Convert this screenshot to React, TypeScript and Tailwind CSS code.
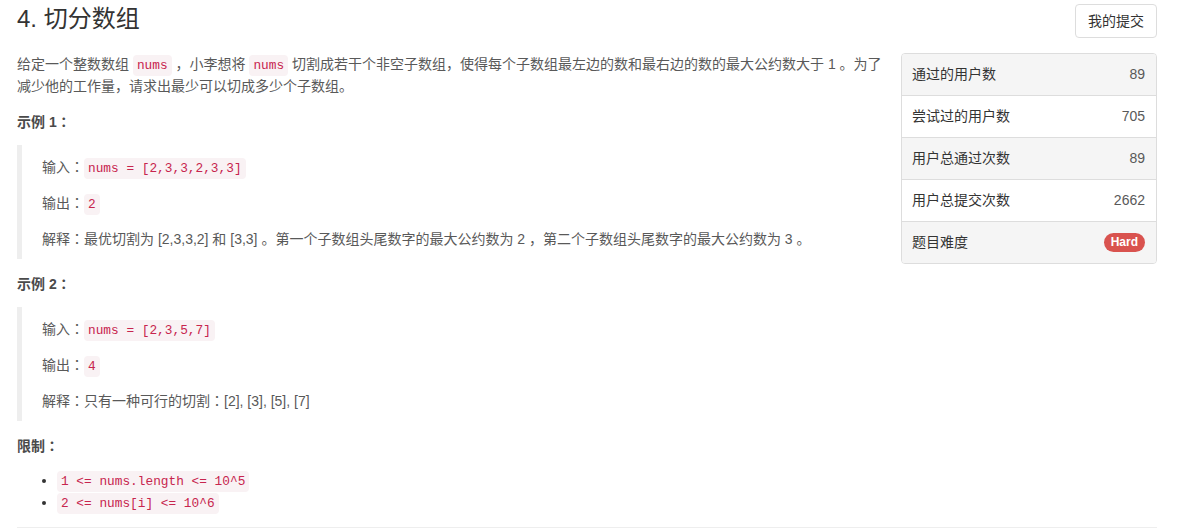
import React from "react";

const sans = "font-['Liberation_Sans','Noto_Sans_CJK_SC',sans-serif]";

// centred full-width colon, like the reference's font
function Colon() {
  return <span className="font-['Noto_Sans_CJK_TC',sans-serif]">：</span>;
}

function Code({ children }: { children: React.ReactNode }) {
  return (
    <code className="font-['Liberation_Mono','DejaVu_Sans_Mono',monospace] text-[12.8px] leading-[14px] text-[#c7254e] bg-[#f9f2f4] rounded-[4px] px-1 py-[3px]">
      {children}
    </code>
  );
}

function Example({ input, output, explain }: { input: string; output: string; explain: React.ReactNode }) {
  return (
    <div className="border-l-[5px] border-[#eeeeee] pl-[20px] py-[10px] flex flex-col gap-[14px]">
      <p className="h-[22px] leading-[22px]">
        输入<Colon />
        <Code>{input}</Code>
      </p>
      <p className="h-[22px] leading-[22px]">
        输出<Colon />
        <Code>{output}</Code>
      </p>
      <p className="h-[22px] leading-[22px]">
        解释<Colon />
        {explain}
      </p>
    </div>
  );
}

const stats = [
  { label: "通过的用户数", value: "89" },
  { label: "尝试过的用户数", value: "705" },
  { label: "用户总通过次数", value: "89" },
  { label: "用户总提交次数", value: "2662" },
];

export default function App() {
  return (
    <div className={`${sans} [text-spacing-trim:space-all] bg-white w-[1179px] h-[529px] overflow-hidden pl-[17px] text-[14px] text-[#595959]`}>
      <div className="w-[1140px]">
        {/* header */}
        <div className="flex items-start justify-between h-[38px]">
          <h1 className="text-[24px] leading-[38px] text-[#333333] font-normal">4. 切分数组</h1>
          <button className="mt-1 h-[34px] w-[82px] border border-[#dddddd] rounded-[4px] text-[14px] text-[#333333] bg-white">
            我的提交
          </button>
        </div>

        <div className="flex gap-[16px] mt-[15px]">
          {/* description */}
          <div className="w-[868px] flex flex-col gap-[13px]">
            <p className="h-[44px] leading-[22px]">
              给定一个整数数组 <Code>nums</Code> ，小李想将 <Code>nums</Code> 切割成若干个非空子数组，使得每个子数组最左边的数和最右边的数的最大公约数大于 1 。为了减少他的工作量，请求出最少可以切成多少个子数组。
            </p>
            <p className="h-[22px] leading-[22px] font-bold text-[#4a4a4a]">
              示例 1<Colon />
            </p>
            <Example
              input="nums = [2,3,3,2,3,3]"
              output="2"
              explain="最优切割为 [2,3,3,2] 和 [3,3] 。第一个子数组头尾数字的最大公约数为 2 ，第二个子数组头尾数字的最大公约数为 3 。"
            />
            <p className="h-[22px] leading-[22px] font-bold text-[#4a4a4a]">
              示例 2<Colon />
            </p>
            <Example
              input="nums = [2,3,5,7]"
              output="4"
              explain={
                <>
                  只有一种可行的切割<Colon />[2], [3], [5], [7]
                </>
              }
            />
            <p className="h-[22px] leading-[22px] font-bold text-[#4a4a4a]">
              限制<Colon />
            </p>
            <ul className="list-disc pl-[40px] marker:text-[#333333]">
              <li className="h-[22px] leading-[22px]">
                <Code>1 &lt;= nums.length &lt;= 10^5</Code>
              </li>
              <li className="h-[22px] leading-[22px]">
                <Code>2 &lt;= nums[i] &lt;= 10^6</Code>
              </li>
            </ul>
          </div>

          {/* stats panel */}
          <div className="w-[256px] self-start border border-[#dddddd] rounded-[4px] overflow-hidden text-[#333333]">
            {stats.map((s, i) => (
              <div
                key={s.label}
                className={`h-[42px] flex items-center justify-between pl-[10px] pr-[11px] border-b border-[#dddddd] ${
                  i % 2 === 0 ? "bg-[#f5f5f5]" : "bg-white"
                }`}
              >
                <span>{s.label}</span>
                <span className="text-[#595959]">{s.value}</span>
              </div>
            ))}
            <div className="h-[41px] flex items-center justify-between pl-[10px] pr-[11px] bg-[#f5f5f5]">
              <span>题目难度</span>
              <span className="bg-[#d9534f] text-white font-bold text-[12px] leading-[19px] rounded-full px-[7px]">Hard</span>
            </div>
          </div>
        </div>

        <div className="mt-[14px] border-t border-[#eeeeee]" />
      </div>
    </div>
  );
}
